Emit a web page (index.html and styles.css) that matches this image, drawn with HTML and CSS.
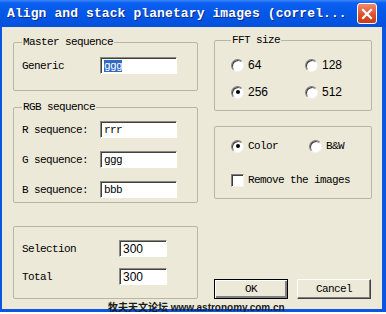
FILE: index.html
```html
<!DOCTYPE html>
<html lang="en">

<head>
    <meta charset="UTF-8">
    <title>Align and stack planetary images</title>
    <link rel="stylesheet" href="styles.css">
</head>

<body>
    <div class="window">
        <div class="titlebar">
            <span class="title">Align and stack planetary images (correl...</span>
            <span class="close">
                <svg width="12" height="12" viewBox="0 0 12 12">
                    <path d="M2 2 L10 10 M10 2 L2 10" stroke="#fff" stroke-width="2.2" stroke-linecap="square" />
                </svg>
            </span>
        </div>

        <div class="client">
            <!-- left column -->
            <div class="col left">
                <fieldset class="group master">
                    <legend>Master sequence</legend>
                    <div class="row">
                        <span class="label">Generic</span>
                        <div class="field"><span class="sel">ggg</span></div>
                    </div>
                </fieldset>

                <fieldset class="group rgb">
                    <legend>RGB sequence</legend>
                    <div class="row">
                        <span class="label">R sequence:</span>
                        <div class="field">rrr</div>
                    </div>
                    <div class="row">
                        <span class="label">G sequence:</span>
                        <div class="field">ggg</div>
                    </div>
                    <div class="row">
                        <span class="label">B sequence:</span>
                        <div class="field">bbb</div>
                    </div>
                </fieldset>

                <div class="group plain counts">
                    <div class="row">
                        <span class="label">Selection</span>
                        <div class="field small num">300</div>
                    </div>
                    <div class="row">
                        <span class="label">Total</span>
                        <div class="field small num">300</div>
                    </div>
                </div>
            </div>

            <!-- right column -->
            <div class="col right">
                <fieldset class="group fft">
                    <legend>FFT size</legend>
                    <div class="opts">
                        <label class="opt"><span class="radio"></span><span class="num">64</span></label>
                        <label class="opt"><span class="radio"></span><span class="num">128</span></label>
                        <label class="opt"><span class="radio on"></span><span class="num">256</span></label>
                        <label class="opt"><span class="radio"></span><span class="num">512</span></label>
                    </div>
                </fieldset>

                <div class="group plain mode">
                    <div class="opts two">
                        <label class="opt"><span class="radio on"></span>Color</label>
                        <label class="opt"><span class="radio"></span>B&amp;W</label>
                    </div>
                    <label class="opt check"><span class="box"></span>Remove the images</label>
                </div>

                <div class="buttons">
                    <button class="btn default">OK</button>
                    <button class="btn">Cancel</button>
                </div>
            </div>
        </div>

        <div class="watermark">牧夫天文论坛 www.astronomy.com.cn</div>
    </div>
</body>

</html>
```

FILE: styles.css
```css
body {
    margin: 0;
    padding: 0;
    background-color: #ffffff;
    font-family: "Liberation Mono", "DejaVu Sans Mono", monospace;
    font-size: 11px;
    letter-spacing: -0.6px;
    color: #000;
}

.window {
    position: relative;
    width: 386px;
    height: 312px;
    box-sizing: border-box;
    background-color: #0a56e0;
    padding: 0 4px 3px 2px;
    display: flex;
    flex-direction: column;
}

.titlebar {
    height: 27px;
    margin: 0 -4px 0 -2px;
    padding: 0 9px 0 7px;
    display: flex;
    align-items: center;
    justify-content: space-between;
    background: linear-gradient(#3b86f7 0, #0a5ff0 3px, #0458e8 50%, #0450dc 100%);
}

.title {
    color: #fff;
    font-weight: bold;
    font-size: 13px;
    letter-spacing: 0.1px;
    text-shadow: 1px 1px #0b2a8a;
}

.close {
    width: 20px;
    height: 21px;
    box-sizing: border-box;
    border: 1px solid #fff;
    border-radius: 3px;
    background: linear-gradient(#f08a6c, #d8502c 60%, #c63c1a);
    display: flex;
    align-items: center;
    justify-content: center;
}

.client {
    flex: 1;
    background-color: #ece9d8;
    display: flex;
    gap: 16px;
    padding-left: 11px;
}

.col {
    display: flex;
    flex-direction: column;
}

.left {
    width: 185px;
}

.right {
    width: 158px;
}

.group {
    box-sizing: border-box;
    margin: 0;
    border: 1px solid #bab6a2;
    border-radius: 2px;
    padding: 0 0 0 8px;
    min-width: 0;
}

.group legend {
    margin-left: 0;
    padding: 0 1px;
    line-height: 12px;
}

.row {
    display: flex;
    align-items: center;
    height: 17px;
}

.label {
    width: 78px;
}

.field {
    width: 77px;
    height: 17px;
    box-sizing: border-box;
    background-color: #fff;
    border-style: solid;
    border-width: 1px;
    border-color: #8a8a82 #fff #fff #8a8a82;
    box-shadow: inset 1px 1px #404040;
    padding: 1px 0 0 3px;
    line-height: 14px;
}

.sel {
    background-color: #316ac5;
    color: #fff;
}

.field.small {
    width: 48px;
}

.num {
    font-family: "Liberation Sans", Arial, sans-serif;
    font-size: 12px;
    letter-spacing: 0;
}

.master {
    margin-top: 9px;
    height: 55px;
    padding-top: 9px;
}

.rgb {
    margin-top: 10px;
    height: 102px;
    padding-top: 8px;
    display: flex;
    flex-direction: column;
    gap: 13px;
}

.counts {
    margin-top: 23px;
    height: 73px;
    padding-top: 13px;
    display: flex;
    flex-direction: column;
    gap: 11px;
}

.counts .label {
    width: 97px;
}

.fft {
    margin-top: 7px;
    height: 77px;
    padding: 12px 0 0 16px;
}

.opts {
    display: grid;
    grid-template-columns: 74px 60px;
    row-gap: 13px;
}

.opt {
    display: flex;
    align-items: center;
    height: 14px;
    gap: 4px;
}

.radio {
    position: relative;
    width: 13px;
    height: 13px;
    box-sizing: border-box;
    border-radius: 50%;
    border: 1px solid;
    border-color: #808080 #f4f3ee #f4f3ee #808080;
    background: radial-gradient(circle at 60% 60%, #ffffff 55%, #e8e6dc);
    box-shadow: inset 1px 1px #3c3c3c;
}

.radio.on::after {
    content: "";
    position: absolute;
    left: 3.5px;
    top: 3.5px;
    width: 4px;
    height: 4px;
    border-radius: 50%;
    background-color: #000;
}

.mode {
    margin-top: 15px;
    height: 73px;
    padding: 12px 0 0 16px;
}

.opts.two {
    grid-template-columns: 78px 60px;
}

.check {
    margin-top: 20px;
}

.box {
    width: 13px;
    height: 13px;
    box-sizing: border-box;
    border: 1px solid;
    border-color: #808080 #f4f3ee #f4f3ee #808080;
    box-shadow: inset 1px 1px #3c3c3c;
    background-color: #fff;
}

.buttons {
    margin-top: 80px;
    display: flex;
    gap: 9px;
}

.btn {
    width: 74px;
    height: 20px;
    box-sizing: border-box;
    font-family: "Liberation Mono", "DejaVu Sans Mono", monospace;
    font-size: 11px;
    letter-spacing: -0.6px;
    color: #000;
    background-color: #ece9d8;
    border: 1px solid;
    border-color: #fff #404040 #404040 #fff;
    box-shadow: inset -1px -1px #808080;
    padding: 0;
}

.btn.default {
    border: 1px solid #000;
    box-shadow: inset 1px 1px #fff, inset -2px -2px #808080;
}

.watermark {
    position: absolute;
    left: 108px;
    top: 302px;
    font-family: "Liberation Sans", "Noto Sans CJK SC", sans-serif;
    font-size: 10px;
    letter-spacing: 0;
    font-weight: bold;
    color: #1a1a1a;
    line-height: 11px;
}
```
